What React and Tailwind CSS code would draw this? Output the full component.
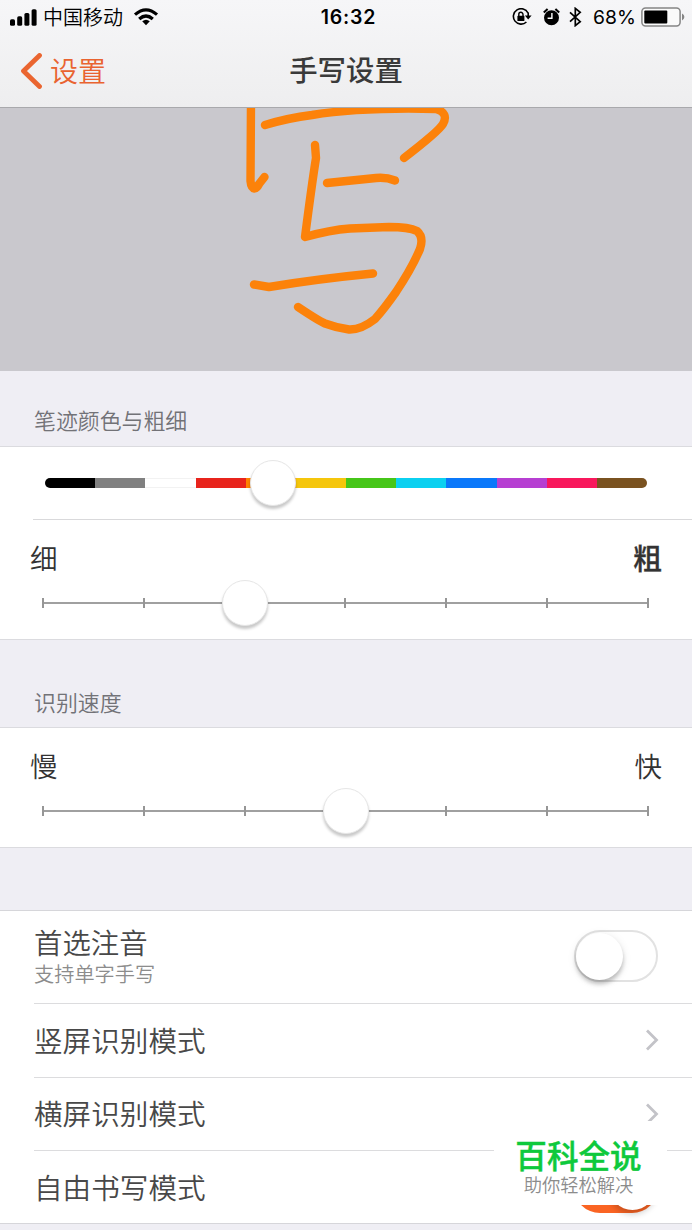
import React from "react";

const SWATCHES = [
  "bg-black",
  "bg-[#808080]",
  "bg-white border-y border-[#f2f2f2]",
  "bg-[#e8241c]",
  "bg-[#ff8200]",
  "bg-[#f5c60c]",
  "bg-[#46c619]",
  "bg-[#0bd0f0]",
  "bg-[#0a78fa]",
  "bg-[#b63fd2]",
  "bg-[#f8185c]",
  "bg-[#7a5220]",
];

function Knob({ left }) {
  return (
    <div
      className="absolute top-1/2 size-[46px] -translate-x-1/2 -translate-y-1/2 rounded-full border border-[#e6e6e6] bg-white shadow-[0_3px_3px_rgba(0,0,0,0.22)]"
      style={{ left: `${left}px` }}
    />
  );
}

function SteppedSlider({ knob }) {
  return (
    <div className="relative mr-[43px] ml-[42px] flex h-[10px] items-center">
      <div className="h-[2px] w-full bg-[#a0a0a0]" />
      <div className="absolute inset-0 flex justify-between">
        {[0, 1, 2, 3, 4, 5, 6].map((n) => (
          <span key={n} className="h-full w-[2px] bg-[#969696]" />
        ))}
      </div>
      <Knob left={knob} />
    </div>
  );
}

function SliderPanel({ low, high, highClass, knob }) {
  return (
    <div className="h-[119px]">
      <div className="flex h-[78px] items-center justify-between px-[30px] pb-[2px] text-[27.5px] text-[#333]">
        <span className="font-[350]">{low}</span>
        <span className={highClass}>{high}</span>
      </div>
      <SteppedSlider knob={knob} />
    </div>
  );
}

function Chevron() {
  return (
    <svg className="-mr-px" width="14" height="24" viewBox="0 0 14 24" fill="none" stroke="#c3c3c8" strokeWidth="2.8">
      <path d="M2 2.500 11.500 12 2 21.500" />
    </svg>
  );
}

function Row({ label, children, last }) {
  return (
    <div
      className={
        last
          ? "flex h-[72px] items-center justify-between pr-[34px]"
          : "flex h-[73.5px] items-center justify-between border-b border-[#dcdcde] pr-[34px]"
      }
    >
      <span className="text-[28.6px] leading-none font-[350] text-[#484848]">{label}</span>
      {children}
    </div>
  );
}

function StatusBar() {
  return (
    <div className="flex h-[34px] items-center text-black">
      <div className="flex flex-1 items-center pl-[10px]">
        <svg width="27" height="17" viewBox="0 0 27 17">
          <rect x="0" y="10.2" width="5" height="6.6" rx="1.6" />
          <rect x="7.2" y="7.3" width="5" height="9.5" rx="1.6" />
          <rect x="14.4" y="4" width="5" height="12.8" rx="1.6" />
          <rect x="21.6" y="0.2" width="5" height="16.6" rx="1.6" />
        </svg>
        <span className="ml-[6px] text-[20px] leading-none font-[350]">中国移动</span>
        <svg className="ml-[10px]" width="26" height="18" viewBox="0 0 26 18" fill="none" stroke="#000" strokeWidth="3.2">
          <path d="M2 6.6Q13-2.8 24 6.6" />
          <path d="M6.2 11Q13 5 19.8 11" />
          <path d="M9.2 13.3Q13 10.3 16.8 13.3L13 17.2Z" fill="#000" stroke="none" />
        </svg>
      </div>
      <span className="mt-[2px] ml-[2px] font-[Inter] text-[19.5px] leading-none font-semibold tracking-[0.8px]">16:32</span>
      <div className="flex flex-1 items-center justify-end pr-[7px]">
        <svg width="20" height="18" viewBox="0 0 20 18">
          <path d="M16 5A7.7 7.7 0 1 0 14.4 14" fill="none" stroke="#000" strokeWidth="1.6" />
          <path d="M16.2 4.5V8" stroke="#000" strokeWidth="1.6" />
          <path d="M12.8 7.6H19.6L16.2 11.500Z" />
          <rect x="5.4" y="7.8" width="7" height="5.3" rx="0.6" />
          <path d="M6.8 8V6.4a2.1 2.1 0 0 1 4.200 0V8" fill="none" stroke="#000" strokeWidth="1.4" />
        </svg>
        <svg className="ml-[11px]" width="17" height="18" viewBox="0 0 17 18">
          <circle cx="8.5" cy="9.7" r="7.5" />
          <path d="M0.8 4.6 4.6 1M16.2 4.6 12.4 1" stroke="#000" strokeWidth="2" />
          <path d="M8.9 5V10.2H4.6" fill="none" stroke="#fff" strokeWidth="1.4" />
        </svg>
        <svg className="ml-[9px]" width="13" height="20" viewBox="0 0 13 20" fill="none" stroke="#000" strokeWidth="1.7">
          <path d="M1 5.4 11.2 14.6 6.3 18.6V1.4L11.2 5.4 1 14.6" />
        </svg>
        <span className="mt-[2px] ml-[11px] font-[Inter] text-[19.3px] leading-none tracking-[0.1px]">68%</span>
        <svg className="ml-[5px]" width="44" height="20" viewBox="0 0 44 20">
          <rect x="0.9" y="0.9" width="38.2" height="18" rx="3.6" fill="#fafafa" stroke="#858585" strokeWidth="1.5" />
          <rect x="3.3" y="3.4" width="23" height="13" rx="1" />
          <path d="M41 6.6Q43.4 8 43.4 10T41 13.4Z" fill="#858585" />
        </svg>
      </div>
    </div>
  );
}

export default function App() {
  return (
    <div className="relative h-[1230px] w-[692px] overflow-hidden bg-[#efeef4] font-['Noto_Sans_CJK_SC',sans-serif]">
      <header className="h-[108px] border-b border-[#a9a9ac] bg-linear-to-b from-[#f6f6f8] to-[#eeeeef]">
        <StatusBar />
        <div className="grid h-[73px] grid-cols-3 items-center text-[28px] leading-none">
          <div className="flex items-center pl-[20px] text-[#e96330]">
            <svg width="23" height="36" viewBox="0 0 23 36" fill="none" stroke="#ea6530" strokeWidth="4.8" strokeLinecap="round" strokeLinejoin="round">
              <path d="M19.5 2.500 3.500 18 19.5 33.500" />
            </svg>
            <span className="ml-[7px] pb-[2px] font-[350]">设置</span>
          </div>
          <h1 className="pb-[2px] text-center text-[28.4px] font-medium text-[#3a3a3a]">手写设置</h1>
        </div>
      </header>

      <div className="h-[263px] bg-[#c9c8cd]">
        <svg width="692" height="263" viewBox="0 108 692 263" fill="none" stroke="#fc820a" strokeWidth="8.4" strokeLinecap="round" strokeLinejoin="round">
          <path d="M251 100 250.500 181Q251 188 254.500 188.500Q257 188 259 184L264.500 177" />
          <path d="M265 125Q288 118 312 115C350 109 396 108 436 109Q449 113 443 124Q439 131 404 158" />
          <path d="M315 145 316 158Q312 183 305 237Q330 230 350 228.500L389 227Q409 227 417 231Q424 237 420 249Q412 268 396 292Q384 309 375 319Q361 330 349 329.500Q337 328 325 323.500Q319 321 298 307" />
          <path d="M327 183 376 178Q386 177 395 180.500" />
          <path d="M254 284.500 269 287Q317 279 373 273.500" />
        </svg>
      </div>

      <h2 className="flex h-[75px] items-center pt-[23px] pl-[34px] text-[21.9px] leading-none font-[350] text-[#727277]">笔迹颜色与粗细</h2>
      <section className="h-[194px] border-y border-[#dbdbdf] bg-white">
        <div className="ml-[33px] h-[73px] border-b border-[#d9d9db] pt-[31px]">
          <div className="relative ml-[12px] w-[602px]">
            <div className="flex h-[10px] overflow-hidden rounded-full">
              {SWATCHES.map((c) => (
                <div key={c} className={`flex-1 ${c}`} />
              ))}
            </div>
            <Knob left={227.5} />
          </div>
        </div>
        <SliderPanel low="细" high="粗" highClass="text-[29px] font-medium [-webkit-text-stroke:0.3px_#333]" knob={203} />
      </section>

      <h2 className="flex h-[87px] items-center pt-[36px] pl-[34px] text-[21.9px] leading-none font-[350] text-[#727277]">识别速度</h2>
      <section className="h-[121px] border-y border-[#dbdbdf] bg-white">
        <SliderPanel low="慢" high="快" highClass="font-[350]" knob={304} />
      </section>

      <section className="mt-[62px] h-[314px] border-y border-[#d6d6da] bg-white pl-[34px]">
        <div className="flex h-[93px] items-center justify-between border-b border-[#dcdcde] pr-[34px]">
          <div className="pb-px">
            <div className="text-[28.4px] leading-[34px] font-[350] text-[#484848]">首选注音</div>
            <div className="text-[20.2px] leading-[29px] font-[350] text-[#8c8c8c]">支持单字手写</div>
          </div>
          <div className="mb-[2px] flex h-[52px] w-[84px] items-center rounded-full border-[2.5px] border-[#e2e2e2] bg-white">
            <div className="size-[47px] shrink-0 rounded-full bg-white shadow-[0_4px_4px_rgba(0,0,0,0.22),0_2px_10px_rgba(0,0,0,0.1)]" />
          </div>
        </div>
        <Row label="竖屏识别模式"><Chevron /></Row>
        <Row label="横屏识别模式"><Chevron /></Row>
        <Row label="自由书写模式" last>
          <div className="mb-px flex h-[52px] w-[84px] items-center justify-end rounded-full bg-[#fa6423] px-[2.5px]">
            <div className="size-[47px] rounded-full bg-white shadow-[0_4px_6px_rgba(0,0,0,0.2)]" />
          </div>
        </Row>
      </section>

      <aside className="absolute top-[1121px] left-[494px] flex h-[84px] w-[173px] flex-col items-center rounded-[4px] bg-white pt-[15px] leading-none">
        <div className="mr-[4px] text-[31.6px] leading-[36px] font-medium text-[#0ec93c] [-webkit-text-stroke:0.4px_#0ec93c]">百科全说</div>
        <div className="mr-[4px] text-[18.3px] leading-[25px] font-[350] text-[#8c8c8c]">助你轻松解决</div>
      </aside>
    </div>
  );
}
